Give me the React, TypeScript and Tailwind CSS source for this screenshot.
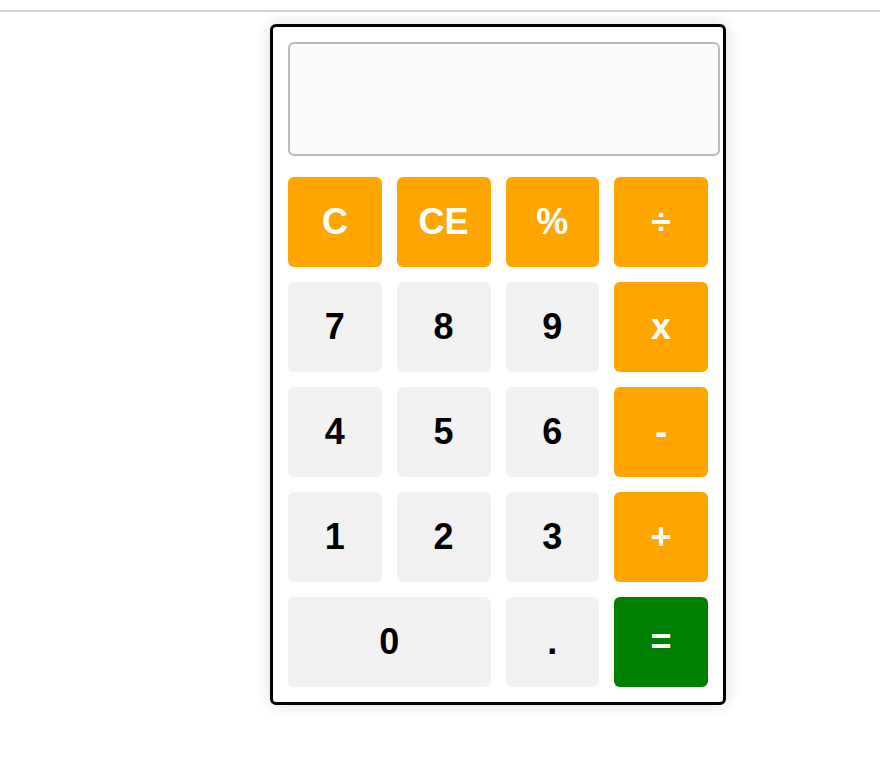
import React, { useState } from 'react';

type Key = { label: string; kind: 'op' | 'num' | 'eq'; wide?: boolean };

const keys: Key[] = [
  { label: 'C', kind: 'op' },
  { label: 'CE', kind: 'op' },
  { label: '%', kind: 'op' },
  { label: '÷', kind: 'op' },
  { label: '7', kind: 'num' },
  { label: '8', kind: 'num' },
  { label: '9', kind: 'num' },
  { label: 'x', kind: 'op' },
  { label: '4', kind: 'num' },
  { label: '5', kind: 'num' },
  { label: '6', kind: 'num' },
  { label: '-', kind: 'op' },
  { label: '1', kind: 'num' },
  { label: '2', kind: 'num' },
  { label: '3', kind: 'num' },
  { label: '+', kind: 'op' },
  { label: '0', kind: 'num', wide: true },
  { label: '.', kind: 'num' },
  { label: '=', kind: 'eq' },
];

const kindClass: Record<Key['kind'], string> = {
  op: 'bg-[#ffa500] text-white',
  num: 'bg-[#f2f2f2] text-black',
  eq: 'bg-[#008000] text-white',
};

const App: React.FC = () => {
  const [display, setDisplay] = useState('');

  const press = (k: string) => {
    if (k === 'C') return setDisplay('');
    if (k === 'CE') return setDisplay((d) => d.slice(0, -1));
    if (k === '=') {
      try {
        const expr = display.replace(/x/g, '*').replace(/÷/g, '/');
        // eslint-disable-next-line no-new-func
        setDisplay(String(Function(`return (${expr})`)()));
      } catch {
        setDisplay('Error');
      }
      return;
    }
    setDisplay((d) => d + k);
  };

  return (
    <div className="min-h-screen bg-white pt-[10px] font-['Liberation_Sans',Arial,sans-serif]">
      <hr className="border-0 h-[2px] bg-[#d3d3d3]" />
      <div className="ml-[270px] mt-[12px] w-[456px] rounded-[6px] border-[3px] border-black bg-white p-[15px] shadow-[0_0_16px_rgba(0,0,0,0.14)]">
        <input
          readOnly
          value={display}
          className="mb-[21px] block h-[114px] w-[432px] rounded-[6px] border-2 border-[#bababa] bg-[#fafafa] px-3 text-right text-[36px] font-bold text-black outline-none"
        />
        <div className="grid grid-cols-4 gap-[15px]">
          {keys.map((k) => (
            <button
              key={k.label}
              onClick={() => press(k.label)}
              className={`flex h-[90px] items-center justify-center rounded-[6px] text-[36px] font-bold leading-none ${kindClass[k.kind]} ${k.wide ? 'col-span-2' : ''}`}
            >
              {k.label}
            </button>
          ))}
        </div>
      </div>
    </div>
  );
};

export default App;
